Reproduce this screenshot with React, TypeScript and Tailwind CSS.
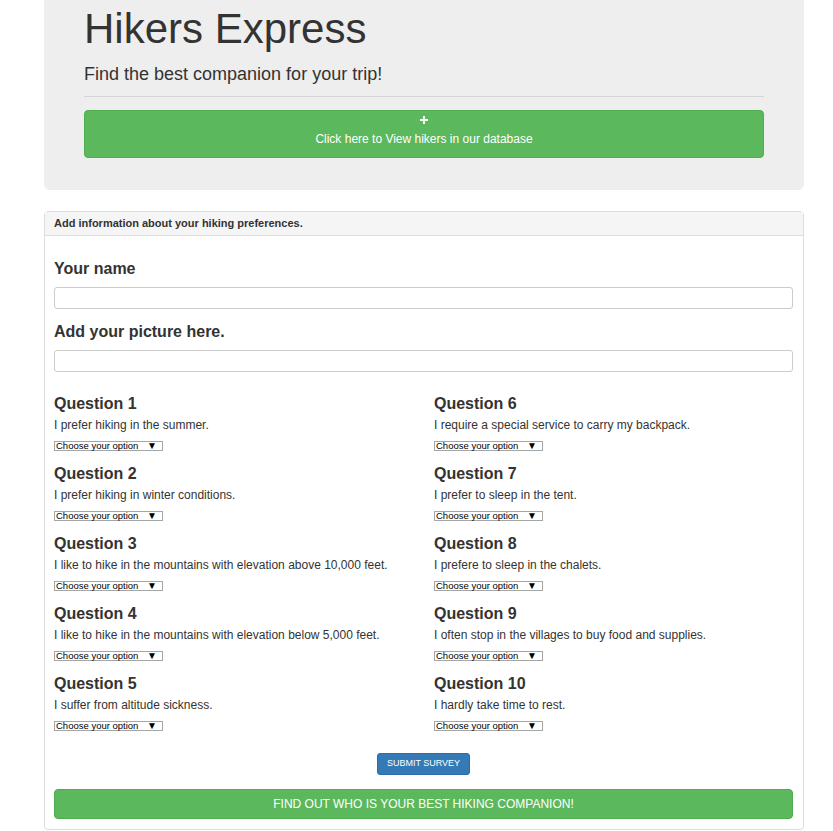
const leftQuestions = [
  { n: 1, text: 'I prefer hiking in the summer.' },
  { n: 2, text: 'I prefer hiking in winter conditions.' },
  { n: 3, text: 'I like to hike in the mountains with elevation above 10,000 feet.' },
  { n: 4, text: 'I like to hike in the mountains with elevation below 5,000 feet.' },
  { n: 5, text: 'I suffer from altitude sickness.' },
];

const rightQuestions = [
  { n: 6, text: 'I require a special service to carry my backpack.' },
  { n: 7, text: 'I prefer to sleep in the tent.' },
  { n: 8, text: 'I prefere to sleep in the chalets.' },
  { n: 9, text: 'I often stop in the villages to buy food and supplies.' },
  { n: 10, text: 'I hardly take time to rest.' },
];

function Question({ n, text }: { n: number; text: string }) {
  return (
    <div>
      <h4 className="text-[16px] leading-[20px] font-bold">Question {n}</h4>
      <p className="mt-[3px] text-[12px] leading-[17px]">{text}</p>
      {/* tiny native-looking dropdown */}
      <div className="mt-[7px] w-[109px] h-[10px] border border-[#a6a6a6] bg-white flex items-center justify-between pl-[1px] pr-[5px] text-[9.5px] leading-none text-black">
        <span>Choose your option</span>
        <span className="text-[10px]">▼</span>
      </div>
    </div>
  );
}

export default function App() {
  return (
    <div className="min-h-screen bg-white text-[#333] font-['Liberation_Sans',Arial,sans-serif]">
      <div className="ml-[44px] w-[760px]">
        {/* Jumbotron */}
        <div className="bg-[#eee] rounded-b-[6px] px-[40px] pt-[6px] pb-[32px]">
          <h1 className="text-[42px] leading-[46px] font-normal">Hikers Express</h1>
          <p className="mt-[9px] text-[18px] leading-[27px]">Find the best companion for your trip!</p>
          <hr className="mt-[8px] border-[#d5d5d5]" />
          <button className="mt-[13px] w-full h-[48px] bg-[#5cb85c] border border-[#4cae4c] rounded-[4px] text-white flex flex-col items-center pt-[5px]">
            <svg width="8" height="8" viewBox="0 0 8 8">
              <rect x="3" y="0" width="2" height="8" fill="white" />
              <rect x="0" y="3" width="8" height="2" fill="white" />
            </svg>
            <span className="mt-[7px] text-[12px] leading-[17px]">Click here to View hikers in our database</span>
          </button>
        </div>

        {/* Survey panel */}
        <div className="mt-[21px] border border-[#ddd] rounded-[4px]">
          <div className="bg-[#f5f5f5] border-b border-[#ddd] h-[24px] px-[9px] text-[11px] leading-[23px] font-bold">
            Add information about your hiking preferences.
          </div>
          <div className="pl-[9px] pr-[10px] pt-[23px] pb-[10px]">
            <label className="block text-[16px] leading-[20px] font-bold">Your name</label>
            <input className="mt-[8px] block w-full h-[22px] border border-[#ccc] rounded-[3px] bg-white" />
            <label className="mt-[13px] block text-[16px] leading-[20px] font-bold">Add your picture here.</label>
            <input className="mt-[8px] block w-full h-[22px] border border-[#ccc] rounded-[3px] bg-white" />

            <div className="mt-[22px] grid grid-cols-[380px_1fr]">
              <div className="flex flex-col gap-[13px]">
                {leftQuestions.map((q) => (
                  <Question key={q.n} n={q.n} text={q.text} />
                ))}
              </div>
              <div className="flex flex-col gap-[13px]">
                {rightQuestions.map((q) => (
                  <Question key={q.n} n={q.n} text={q.text} />
                ))}
              </div>
            </div>

            <div className="mt-[22px] flex justify-center">
              <button className="h-[22px] px-[9px] bg-[#337ab7] border border-[#2e6da4] rounded-[3px] text-white text-[9px] uppercase">
                Submit Survey
              </button>
            </div>
            <button className="mt-[14px] w-full h-[30px] bg-[#5cb85c] border border-[#4cae4c] rounded-[4px] text-white text-[12px] uppercase">
              Find out who is your best hiking companion!
            </button>
          </div>
        </div>
      </div>
    </div>
  );
}
